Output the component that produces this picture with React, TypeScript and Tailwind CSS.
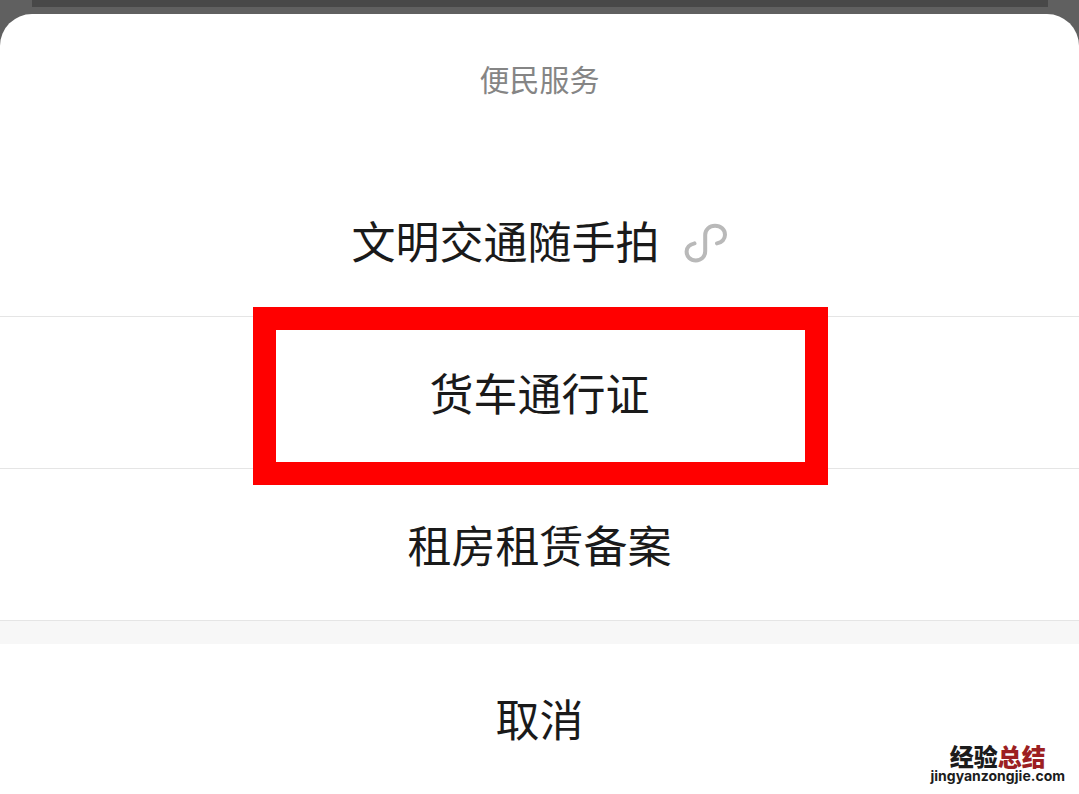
import { useState } from "react";

interface ServiceItem {
  id: string;
  label: string;
  miniProgram?: boolean;
  highlighted?: boolean;
}

const services: ServiceItem[] = [
  { id: "snapshot", label: "文明交通随手拍", miniProgram: true },
  { id: "truck-pass", label: "货车通行证", highlighted: true },
  { id: "rental", label: "租房租赁备案" },
];

function MiniProgramIcon() {
  return (
    <svg className="h-11 w-11 overflow-visible" viewBox="0 0 44 44" fill="none" aria-hidden="true">
      <path
        d="M10.5 25.4C5.6 26.6 2.6 29.6 2.6 33.6C2.6 38.8 6.6 42.4 11.8 42.4C17.2 42.4 21.2 38.6 21.2 33.2V17C21.2 11.6 25.4 7.8 31 7.8C36.8 7.8 41 11.6 41 16.8C41 21 38 24.4 33 25.4"
        stroke="#b9b9b9"
        strokeWidth="4"
        strokeLinecap="round"
      />
    </svg>
  );
}

function ServiceRow({ item, onSelect }: { item: ServiceItem; onSelect: (id: string) => void }) {
  return (
    <li className="relative border-b border-[#e5e5e5]">
      <button
        onClick={() => onSelect(item.id)}
        className="flex h-[151px] w-full items-center justify-center gap-6 pb-[2px] text-[44px] leading-[64px]"
      >
        <span>{item.label}</span>
        {item.miniProgram && <MiniProgramIcon />}
      </button>
      {item.highlighted && (
        <div className="pointer-events-none absolute -top-[10px] -bottom-[17px] right-[251px] left-[253px] z-10 border-[23px] border-[#ff0000]" />
      )}
    </li>
  );
}

function Watermark() {
  return (
    <div className="absolute right-[14px] bottom-[10px] flex flex-col items-center text-[#1c1c1c]">
      <p className="flex font-['Noto_Sans_CJK_SC',sans-serif] text-2xl leading-6 font-black">
        <span>经验</span>
        <span className="text-[#9c1f22]">总结</span>
      </p>
      <p className="font-['Inter',sans-serif] text-sm leading-4 font-bold">jingyanzongjie.com</p>
    </div>
  );
}

export default function App() {
  const [, setSelected] = useState<string | null>(null);

  return (
    <div className="relative min-h-screen overflow-hidden bg-[#606060] font-['Noto_Sans_CJK_SC',sans-serif] text-[#1a1a1a]">
      <div className="mr-[31px] mb-[7px] ml-8 h-[7px] bg-[#484848]" />

      <section className="rounded-t-[32px] bg-white">
        <h1 className="flex h-[151px] justify-center pt-[42px] text-[30px] leading-[44px] font-normal text-[#858585]">
          便民服务
        </h1>
        <ul>
          {services.map((item) => (
            <ServiceRow key={item.id} item={item} onSelect={setSelected} />
          ))}
        </ul>
        <div className="h-[23px] bg-[#f7f7f7]" />
        <button
          onClick={() => setSelected(null)}
          className="flex h-[150px] w-full items-center justify-center pb-[2px] text-[44px] leading-[64px]"
        >
          取消
        </button>
      </section>

      <Watermark />
    </div>
  );
}
